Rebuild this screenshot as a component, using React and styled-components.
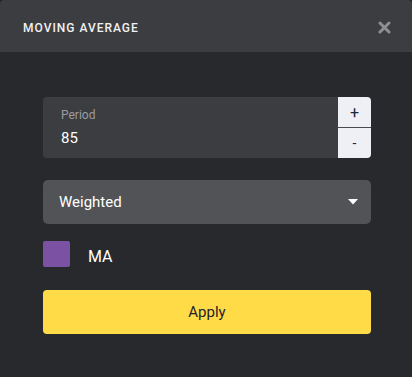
import React from 'react';
import styled, { createGlobalStyle } from 'styled-components';

const GlobalStyle = createGlobalStyle`
  html, body {
    margin: 0;
    padding: 0;
    background: #1e1f22;
  }
  body {
    font-family: Roboto, "Noto Sans", sans-serif;
  }
`;

const Dialog = styled.div`
  width: 412px;
  height: 377px;
  background: #28292d;
  border-radius: 4px 4px 0 0;
  overflow: hidden;
  display: flex;
  flex-direction: column;
`;

const Header = styled.div`
  height: 52px;
  background: #3c3d41;
  display: flex;
  align-items: center;
  justify-content: space-between;
  padding: 0 20px 0 23px;
  box-sizing: border-box;
`;

const Title = styled.div`
  color: #f1f1f3;
  font-size: 12px;
  font-weight: 500;
  letter-spacing: 1px;
  margin-top: 4px;
`;

const CloseButton = styled.button`
  border: 0;
  background: none;
  padding: 0;
  width: 14px;
  height: 14px;
  display: flex;
  margin-top: 4px;
  cursor: pointer;
`;

const Body = styled.div`
  display: flex;
  flex-direction: column;
  padding: 45px 41px 0 43px;
`;

const PeriodField = styled.div`
  display: flex;
  height: 61px;
  border-radius: 4px;
  overflow: hidden;
`;

const PeriodInput = styled.div`
  flex: 1;
  background: #3c3d41;
  padding: 11px 18px 0;
  display: flex;
  flex-direction: column;
`;

const Label = styled.div`
  color: #9b9ca0;
  font-size: 12px;
  line-height: 14px;
`;

const Value = styled.div`
  color: #ffffff;
  font-size: 15px;
  line-height: 18px;
  margin-top: 7px;
`;

const Stepper = styled.div`
  width: 33px;
  display: flex;
  flex-direction: column;
  background: #eef0f5;
`;

const StepButton = styled.div`
  flex: 1;
  display: flex;
  align-items: center;
  justify-content: center;
  color: #1b2740;
  font-size: ${p => (p.$small ? '14px' : '16px')};
  border-top: ${p => (p.$divider ? '1px solid #4a4b4f' : 'none')};
`;

const Select = styled.div`
  margin-top: 22px;
  height: 44px;
  background: #525357;
  border-radius: 5px;
  display: flex;
  align-items: center;
  justify-content: space-between;
  padding: 0 13px 0 16px;
  color: #ffffff;
  font-size: 15px;
`;

const ColorRow = styled.div`
  margin-top: 17px;
  display: flex;
  align-items: center;
  gap: 18px;
`;

const Swatch = styled.div`
  width: 27px;
  height: 26px;
  border-radius: 2px;
  background: ${p => p.$color};
`;

const SeriesName = styled.div`
  color: #ffffff;
  font-size: 16px;
  margin-top: 4px;
`;

const ApplyButton = styled.button`
  margin-top: 23px;
  height: 44px;
  border: 0;
  border-radius: 4px;
  background: #ffdb47;
  color: #1f2329;
  font-family: Roboto, "Noto Sans", sans-serif;
  font-size: 15px;
  cursor: pointer;
`;

const App = () => (
  <>
    <GlobalStyle />
    <Dialog>
      <Header>
        <Title>MOVING AVERAGE</Title>
        <CloseButton aria-label="close">
          <svg width="13" height="13" viewBox="0 0 13 13">
            <path d="M2 2 L11 11 M11 2 L2 11" stroke="#8e8f93" strokeWidth="3" strokeLinecap="round" />
          </svg>
        </CloseButton>
      </Header>
      <Body>
        <PeriodField>
          <PeriodInput>
            <Label>Period</Label>
            <Value>85</Value>
          </PeriodInput>
          <Stepper>
            <StepButton>+</StepButton>
            <StepButton $divider $small>-</StepButton>
          </Stepper>
        </PeriodField>
        <Select>
          <span>Weighted</span>
          <svg width="10" height="6" viewBox="0 0 10 6">
            <path d="M0 0 L10 0 L5 5.5 Z" fill="#ffffff" />
          </svg>
        </Select>
        <ColorRow>
          <Swatch $color="#7b51a3" />
          <SeriesName>MA</SeriesName>
        </ColorRow>
        <ApplyButton>Apply</ApplyButton>
      </Body>
    </Dialog>
  </>
);

export default App;
